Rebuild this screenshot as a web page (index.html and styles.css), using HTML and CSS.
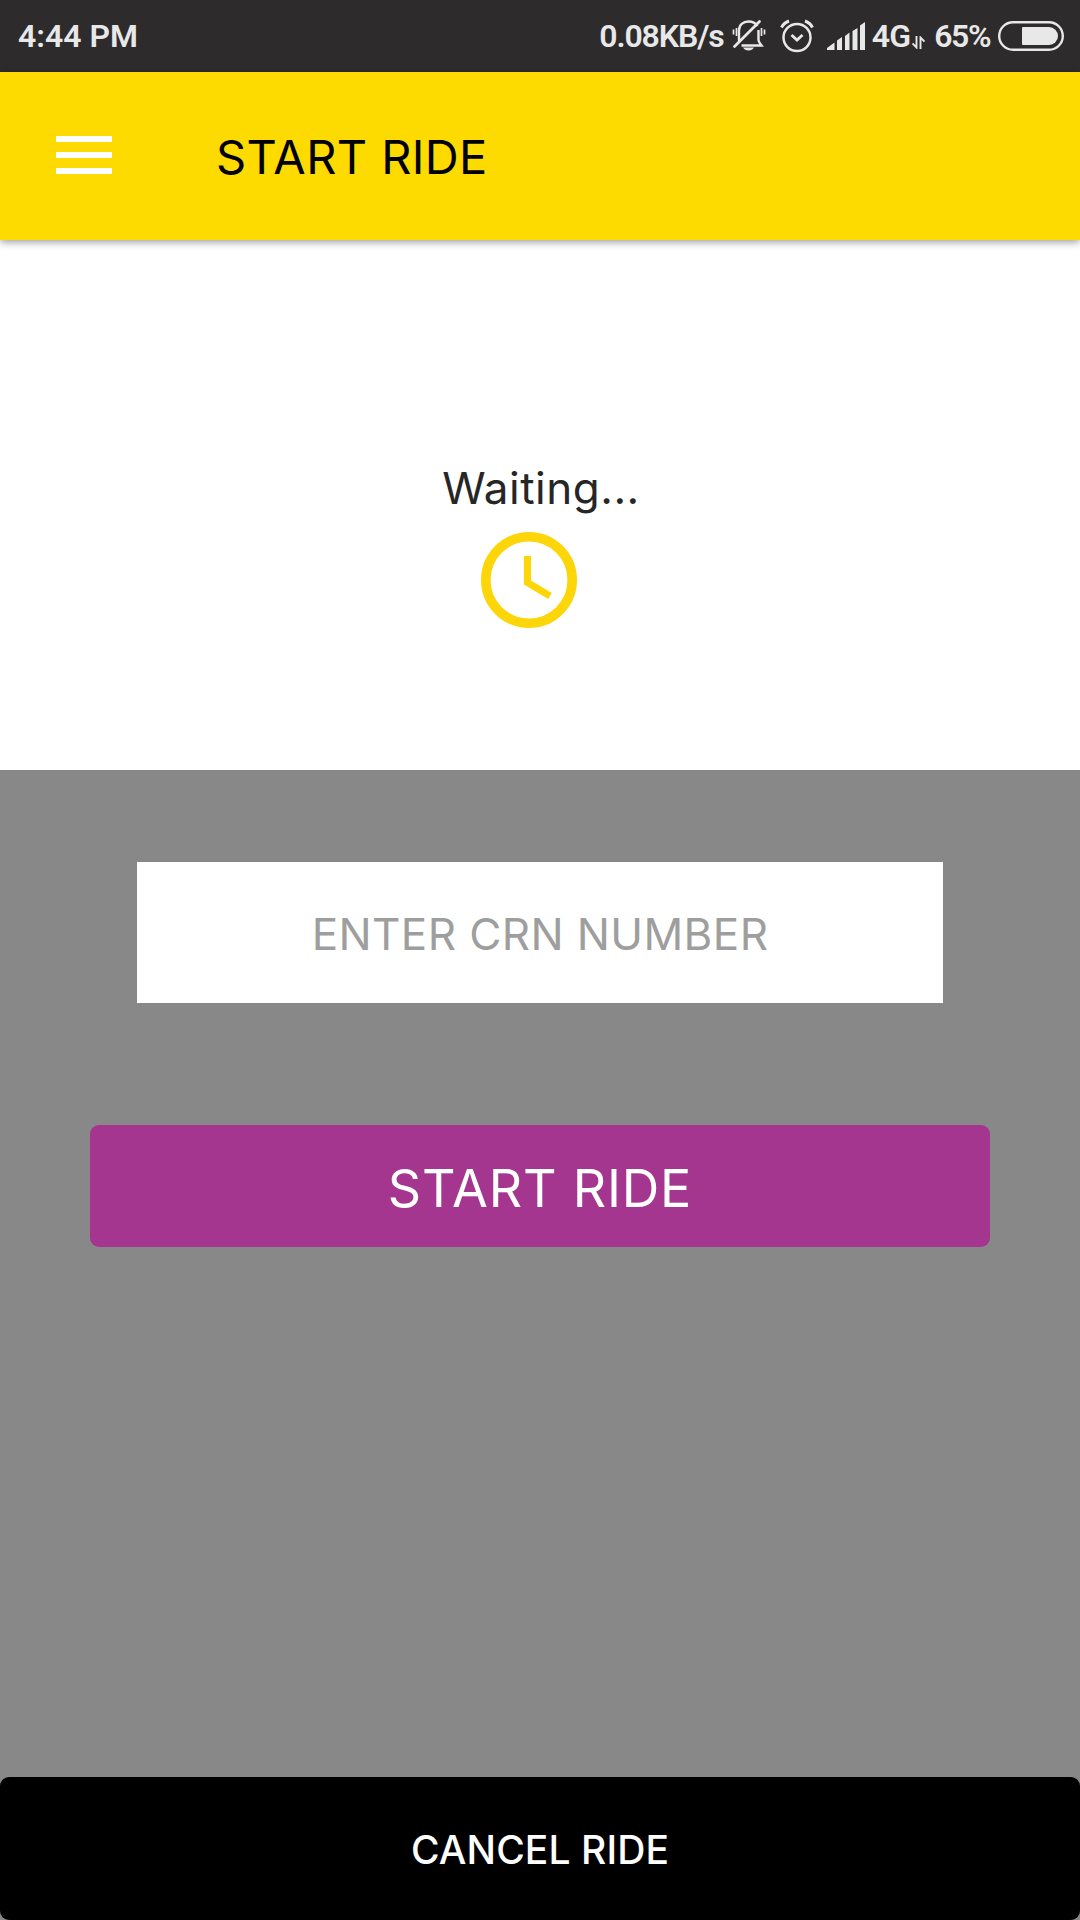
FILE: index.html
```
<!DOCTYPE html>
<html lang="en">
<head>
    <meta charset="UTF-8">
    <meta name="viewport" content="width=device-width, initial-scale=1.0">
    <title>Start Ride</title>
    <link rel="stylesheet" href="styles.css">
</head>
<body>
    <div class="status-bar">
        <span class="time">4:44 PM</span>
        <div class="status-icons">
            <span class="speed">0.08KB/s</span>
            <svg class="bell" width="34" height="34" viewBox="0 0 34 34" fill="none" stroke="#e8e8e8" stroke-width="2.400">
                <path d="M7 22V11.500C7 6 11 2.500 16.500 2.500c4 0 7 1.500 9 4.500M26.500 11v10c0 2 1.500 3.500 3 5.500H9.500" />
                <path d="M2.500 27.500L27.500 2.500" stroke-width="2.800" stroke-linecap="round" />
                <path d="M4.500 9v8M1.500 10.500v5M29.500 9v8M32.500 10.500v5" stroke-width="1.700" />
                <path d="M11 28.500h11c-1 2-3 3-5.500 3s-4.500-1-5.500-3z" fill="#e8e8e8" stroke="none" />
            </svg>
            <svg class="alarm" width="34" height="34" viewBox="0 0 34 34" fill="none" stroke="#e8e8e8" stroke-width="2.500">
                <circle cx="17" cy="18.500" r="13.500" />
                <path d="M11.500 16l5.500 5 5.500-5" stroke-width="2.800" />
                <path d="M1.500 8.500C3 5.500 6 3 9 2M32.500 8.500C31 5.500 28 3 25 2" stroke-width="3" />
            </svg>
            <svg class="signal" width="38" height="28" viewBox="0 0 38 28" fill="#e8e8e8">
                <path d="M0 28v-2l7.500-5.500V28zM10 28v-9.500l5-3.500v13zM18 28V14l4.500-3.500V28zM25.500 28V9L30.500 6v22zM33 28V3.500L38 0v28z" />
            </svg>
            <span class="network">4G</span>
            <svg class="data" width="13" height="13" viewBox="0 0 13 13" fill="none" stroke="#e8e8e8" stroke-width="1.900">
                <path d="M4.500 0v11.500L.5 7.500M8.500 13V1.500l4 4" />
            </svg>
            <span class="percent">65%</span>
            <svg class="battery" width="66" height="30" viewBox="0 0 66 30">
                <rect x="1.200" y="1.200" width="63.600" height="27.600" rx="13.800" fill="none" stroke="#e8e8e8" stroke-width="2.400" />
                <path d="M25 6h26a9 9 0 0 1 0 18H25a1 1 0 0 1-1-1V7a1 1 0 0 1 1-1z" fill="#e8e8e8" />
            </svg>
        </div>
    </div>

    <header class="app-bar">
        <button class="menu-btn" aria-label="Menu">
            <span></span>
            <span></span>
            <span></span>
        </button>
        <h1>START RIDE</h1>
    </header>

    <section class="waiting">
        <p>Waiting...</p>
        <svg class="clock" width="96" height="96" viewBox="0 0 96 96" fill="none" stroke="#fdd60a">
            <circle cx="48" cy="48" r="43.200" stroke-width="9.600" />
            <path d="M46.500 24v26.500L69 64" stroke-width="7.200" />
        </svg>
    </section>

    <main class="ride-form">
        <input type="text" id="crn" placeholder="ENTER CRN NUMBER">
        <button class="start-btn">START RIDE</button>
        <button class="cancel-btn">CANCEL RIDE</button>
    </main>
</body>
</html>
```
FILE: styles.css
```
* {
    box-sizing: border-box;
}

body {
    margin: 0;
    height: 1920px;
    display: flex;
    flex-direction: column;
    font-family: Inter, "Liberation Sans", sans-serif;
    background: #fff;
}

button {
    border: none;
    padding: 0;
    font-family: inherit;
}

.status-bar {
    height: 72px;
    padding: 0 16px 0 18px;
    display: flex;
    justify-content: space-between;
    align-items: center;
    background: #2d2b2c;
    color: #e8e8e8;
    font-family: Roboto, sans-serif;
    font-size: 32px;
    font-weight: 600;
    line-height: 38px;
}

.status-icons {
    display: flex;
    align-items: center;
}

.speed {
    letter-spacing: -1.1px;
}

.bell {
    margin-left: 8px;
}

.alarm {
    margin-left: 14px;
}

.signal {
    margin-left: 13px;
}

.network {
    margin-left: 7px;
    letter-spacing: -0.7px;
}

.data {
    margin: 12px 0 0 2px;
}

.percent {
    margin: 0 8px 0 9px;
    letter-spacing: -1.5px;
}

.app-bar {
    position: relative;
    height: 168px;
    padding-left: 56px;
    display: flex;
    align-items: center;
    background: #fddb00;
    box-shadow: 0 2px 8px rgba(0, 0, 0, 0.4);
}

.menu-btn {
    width: 56px;
    margin-bottom: 2px;
    display: flex;
    flex-direction: column;
    gap: 10px;
    background: none;
}

.menu-btn span {
    width: 100%;
    height: 6px;
    background: #fff;
}

.app-bar h1 {
    margin: 0 0 0 104px;
    font-size: 47px;
    font-weight: 400;
    letter-spacing: 0.4px;
    color: #000;
}

.waiting {
    height: 530px;
    padding-top: 221px;
    display: flex;
    flex-direction: column;
    align-items: center;
}

.waiting p {
    margin: 0;
    padding-left: 2px;
    font-size: 44px;
    line-height: 54px;
    letter-spacing: 0.5px;
    color: #262626;
}

.clock {
    margin: 17px 22px 0 0;
}

.ride-form {
    flex: 1;
    padding-top: 92px;
    display: flex;
    flex-direction: column;
    align-items: center;
    background: #888;
}

#crn {
    width: 806px;
    height: 141px;
    padding: 2px 0 0;
    border: none;
    background: #fff;
    font-family: inherit;
    font-size: 44px;
    letter-spacing: 0.4px;
    text-align: center;
}

#crn::placeholder {
    color: #9e9e9e;
}

.start-btn {
    width: 900px;
    height: 122px;
    margin-top: 122px;
    padding-top: 4px;
    border-radius: 9px;
    background: #a43690;
    color: #fff;
    font-size: 52px;
    letter-spacing: 0.8px;
}

.cancel-btn {
    width: 100%;
    height: 143px;
    margin-top: auto;
    padding-top: 2px;
    border-radius: 9px;
    background: #000;
    color: #fff;
    font-size: 39px;
    font-weight: 500;
    letter-spacing: 0.1px;
}
```
